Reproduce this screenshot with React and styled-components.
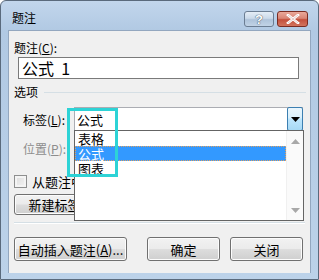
import styled, { createGlobalStyle } from 'styled-components';

const GlobalStyle = createGlobalStyle`
  html, body {
    margin: 0;
    padding: 0;
    background: #ffffff;
  }
  body {
    font-family: "Noto Sans CJK SC", "Noto Sans", sans-serif;
    font-size: 12px;
    color: #000;
  }
`;

const FONT = `"Noto Sans CJK SC", "Noto Sans", sans-serif`;

function App() {
  return (
    <>
      <GlobalStyle />
      <Window>
        <TitleBar>
          <Title>题注</Title>
          <CaptionButtons>
            <HelpButton>?</HelpButton>
            <CloseButton>
              <svg width="14" height="10" viewBox="0 0 14 10">
                <path d="M2 1 L12 9 M12 1 L2 9" stroke="#fff" strokeWidth="2.6" strokeLinecap="square" />
                <path d="M2 1 L12 9 M12 1 L2 9" stroke="#8a2b1e" strokeWidth="0.6" opacity="0.4" />
              </svg>
            </CloseButton>
          </CaptionButtons>
        </TitleBar>
        <Client>
          <Label>
            题注(<u>C</u>):
          </Label>
          <CaptionInput>公式&nbsp;&nbsp;1</CaptionInput>
          <GroupHeader>
            <span>选项</span>
            <GroupLine />
          </GroupHeader>
          <FieldRow $gap="7px">
            <FieldLabel>
              标签(<u>L</u>):
            </FieldLabel>
            <ComboWrap>
              <Combo>
                <ComboValue>公式</ComboValue>
                <DropButton>
                  <svg width="9" height="5" viewBox="0 0 9 5">
                    <path d="M0 0 L9 0 L4.5 5 Z" fill="#000" />
                  </svg>
                </DropButton>
              </Combo>
              <DropList>
                <Items>
                  <Item>表格</Item>
                  <Item $selected>公式</Item>
                  <Item>图表</Item>
                </Items>
                <ScrollBar>
                  <svg width="9" height="5" viewBox="0 0 9 5">
                    <path d="M0 5 L9 5 L4.5 0 Z" fill="#a8a8a8" />
                  </svg>
                  <svg width="9" height="5" viewBox="0 0 9 5">
                    <path d="M0 0 L9 0 L4.5 5 Z" fill="#a8a8a8" />
                  </svg>
                </ScrollBar>
              </DropList>
              <Marker />
            </ComboWrap>
          </FieldRow>
          <FieldRow $gap="5px" $disabled>
            <FieldLabel>
              位置(<u>P</u>):
            </FieldLabel>
          </FieldRow>
          <CheckRow>
            <CheckBox />
            <span>从题注中排除标签(E)</span>
          </CheckRow>
          <SmallButtonRow>
            <PushButton $width="110px" $height="21px">新建标签(N)...</PushButton>
          </SmallButtonRow>
          <Separator />
          <BottomButtons>
            <PushButton $width="113px">
              自动插入题注(<u>A</u>)...
            </PushButton>
            <RightButtons>
              <PushButton $width="73px">确定</PushButton>
              <PushButton $width="73px">关闭</PushButton>
            </RightButtons>
          </BottomButtons>
        </Client>
      </Window>
    </>
  );
}

const Window = styled.div`
  width: 319px;
  height: 280px;
  box-sizing: border-box;
  border: 1px solid #5a6a7c;
  border-radius: 6px 6px 0 0;
  background: linear-gradient(180deg, #c2d6ec 0px, #b1c9e3 30px, #bcd2e9 100%);
  display: flex;
  flex-direction: column;
  position: relative;
  overflow: hidden;
`;

const TitleBar = styled.div`
  height: 29px;
  display: flex;
  align-items: center;
  justify-content: space-between;
  padding: 0 10px 0 11px;
`;

const Title = styled.div`
  font-family: ${FONT};
  font-size: 12px;
  color: #000;
  margin-top: 4px;
`;

const CaptionButtons = styled.div`
  display: flex;
  gap: 3px;
  margin-top: 7px;
`;

const CaptionBase = styled.div`
  height: 16px;
  box-sizing: border-box;
  border-radius: 3px;
  display: flex;
  align-items: center;
  justify-content: center;
`;

const HelpButton = styled(CaptionBase)`
  width: 30px;
  border: 1px solid #6b7d92;
  background: linear-gradient(180deg, #e4edf6 0%, #cbdaea 45%, #aec3da 55%, #c1d3e6 100%);
  font-family: "Liberation Sans", sans-serif;
  font-weight: bold;
  font-size: 13px;
  color: #fff;
  text-shadow: 0 0 1px #3b4b5e, 0 0 1px #3b4b5e;
`;

const CloseButton = styled(CaptionBase)`
  width: 31px;
  border: 1px solid #7a2c22;
  background: linear-gradient(180deg, #eaa99a 0%, #d98575 45%, #c4503c 55%, #d2745e 100%);
`;

const Client = styled.div`
  flex: 1;
  margin: 0 7px 6px 7px;
  background: #f0f0f0;
  border: 1px solid #93a7bf;
  border-bottom: none;
  display: flex;
  flex-direction: column;
  padding: 9px 0 0 5px;
  font-family: ${FONT};
  font-size: 12px;
  color: #000;
`;

const Label = styled.div`
  height: 16px;
  line-height: 16px;
  u {
    text-decoration: underline;
  }
`;

const CaptionInput = styled.div`
  margin: 1px 0 0 4px;
  width: 281px;
  height: 22px;
  box-sizing: border-box;
  border: 1px solid #7a7a7a;
  background: #fff;
  font-size: 16px;
  line-height: 20px;
  padding-left: 3px;
`;

const GroupHeader = styled.div`
  display: flex;
  align-items: center;
  gap: 6px;
  height: 16px;
  line-height: 16px;
  margin-top: 5px;
`;

const GroupLine = styled.div`
  flex: 0 0 262px;
  height: 1px;
  background: #d5dfe5;
  margin-top: 1px;
`;

const FieldRow = styled.div`
  display: flex;
  align-items: center;
  height: 24px;
  margin-top: ${({ $gap }) => $gap};
  padding-left: 9px;
  color: ${({ $disabled }) => ($disabled ? '#8d8d8d' : '#000')};
  u {
    text-decoration: underline;
  }
`;

const FieldLabel = styled.div`
  width: 51px;
`;

const ComboWrap = styled.div`
  position: relative;
  z-index: 2;
`;

const Combo = styled.div`
  width: 229px;
  height: 24px;
  box-sizing: border-box;
  border: 1px solid #abadb3;
  border-right: none;
  background: #fff;
  display: flex;
  align-items: center;
  justify-content: space-between;
`;

const ComboValue = styled.div`
  font-size: 13px;
  padding-left: 2px;
`;

const DropButton = styled.div`
  width: 16px;
  height: 24px;
  box-sizing: border-box;
  border: 1px solid #3c7fb1;
  border-radius: 2px;
  background: linear-gradient(180deg, #eaf6fd 0%, #d9f0fc 45%, #bee6fd 50%, #a7d9f5 100%);
  display: flex;
  align-items: center;
  justify-content: center;
  margin-top: -1px;
  margin-bottom: -1px;
`;

const DropList = styled.div`
  position: absolute;
  left: 0;
  top: 23px;
  width: 230px;
  height: 91px;
  box-sizing: border-box;
  border: 1px solid #646464;
  background: #fff;
  display: flex;
`;

const Items = styled.div`
  flex: 1;
  display: flex;
  flex-direction: column;
`;

const Item = styled.div`
  height: 15px;
  font-size: 13px;
  line-height: 13px;
  padding-left: 2px;
  box-sizing: border-box;
  background: ${({ $selected }) => ($selected ? '#3399ff' : 'transparent')};
  color: ${({ $selected }) => ($selected ? '#fff' : '#000')};
  border: 1px dotted ${({ $selected }) => ($selected ? '#e0a060' : 'transparent')};
`;

const ScrollBar = styled.div`
  width: 16px;
  background: #fafafa;
  border-left: 1px solid #f0f0f0;
  display: flex;
  flex-direction: column;
  align-items: center;
  justify-content: space-between;
  padding: 8px 0 7px;
`;

const Marker = styled.div`
  position: absolute;
  left: -7px;
  top: 1px;
  width: 51px;
  height: 69px;
  box-sizing: border-box;
  border: 3px solid #2dd3d6;
  pointer-events: none;
`;

const CheckRow = styled.div`
  display: flex;
  align-items: center;
  gap: 5px;
  height: 16px;
  margin-top: 13px;
  font-size: 13px;
`;

const CheckBox = styled.div`
  width: 13px;
  height: 13px;
  box-sizing: border-box;
  border: 1px solid #8e8f8f;
  background: linear-gradient(135deg, #dcdcdc 0%, #f4f4f4 100%);
  box-shadow: inset 0 0 0 2px #f4f4f4;
`;

const SmallButtonRow = styled.div`
  display: flex;
  margin-top: 5px;
`;

const PushButton = styled.div`
  width: ${({ $width }) => $width};
  height: ${({ $height }) => $height || '24px'};
  box-sizing: border-box;
  border: 1px solid #707070;
  border-radius: 3px;
  background: linear-gradient(180deg, #f2f2f2 0%, #ebebeb 48%, #dddddd 52%, #cfcfcf 100%);
  box-shadow: inset 0 0 0 1px #fcfcfc;
  display: flex;
  align-items: center;
  justify-content: center;
  font-size: 13px;
  white-space: nowrap;
  u {
    text-decoration: underline;
  }
`;

const Separator = styled.div`
  width: 291px;
  height: 1px;
  margin-top: 7px;
  background: #d5dfe5;
  border-bottom: 1px solid #fff;
`;

const BottomButtons = styled.div`
  display: flex;
  justify-content: space-between;
  width: 289px;
  margin-top: 13px;
`;

const RightButtons = styled.div`
  display: flex;
  gap: 10px;
`;

export default App;
